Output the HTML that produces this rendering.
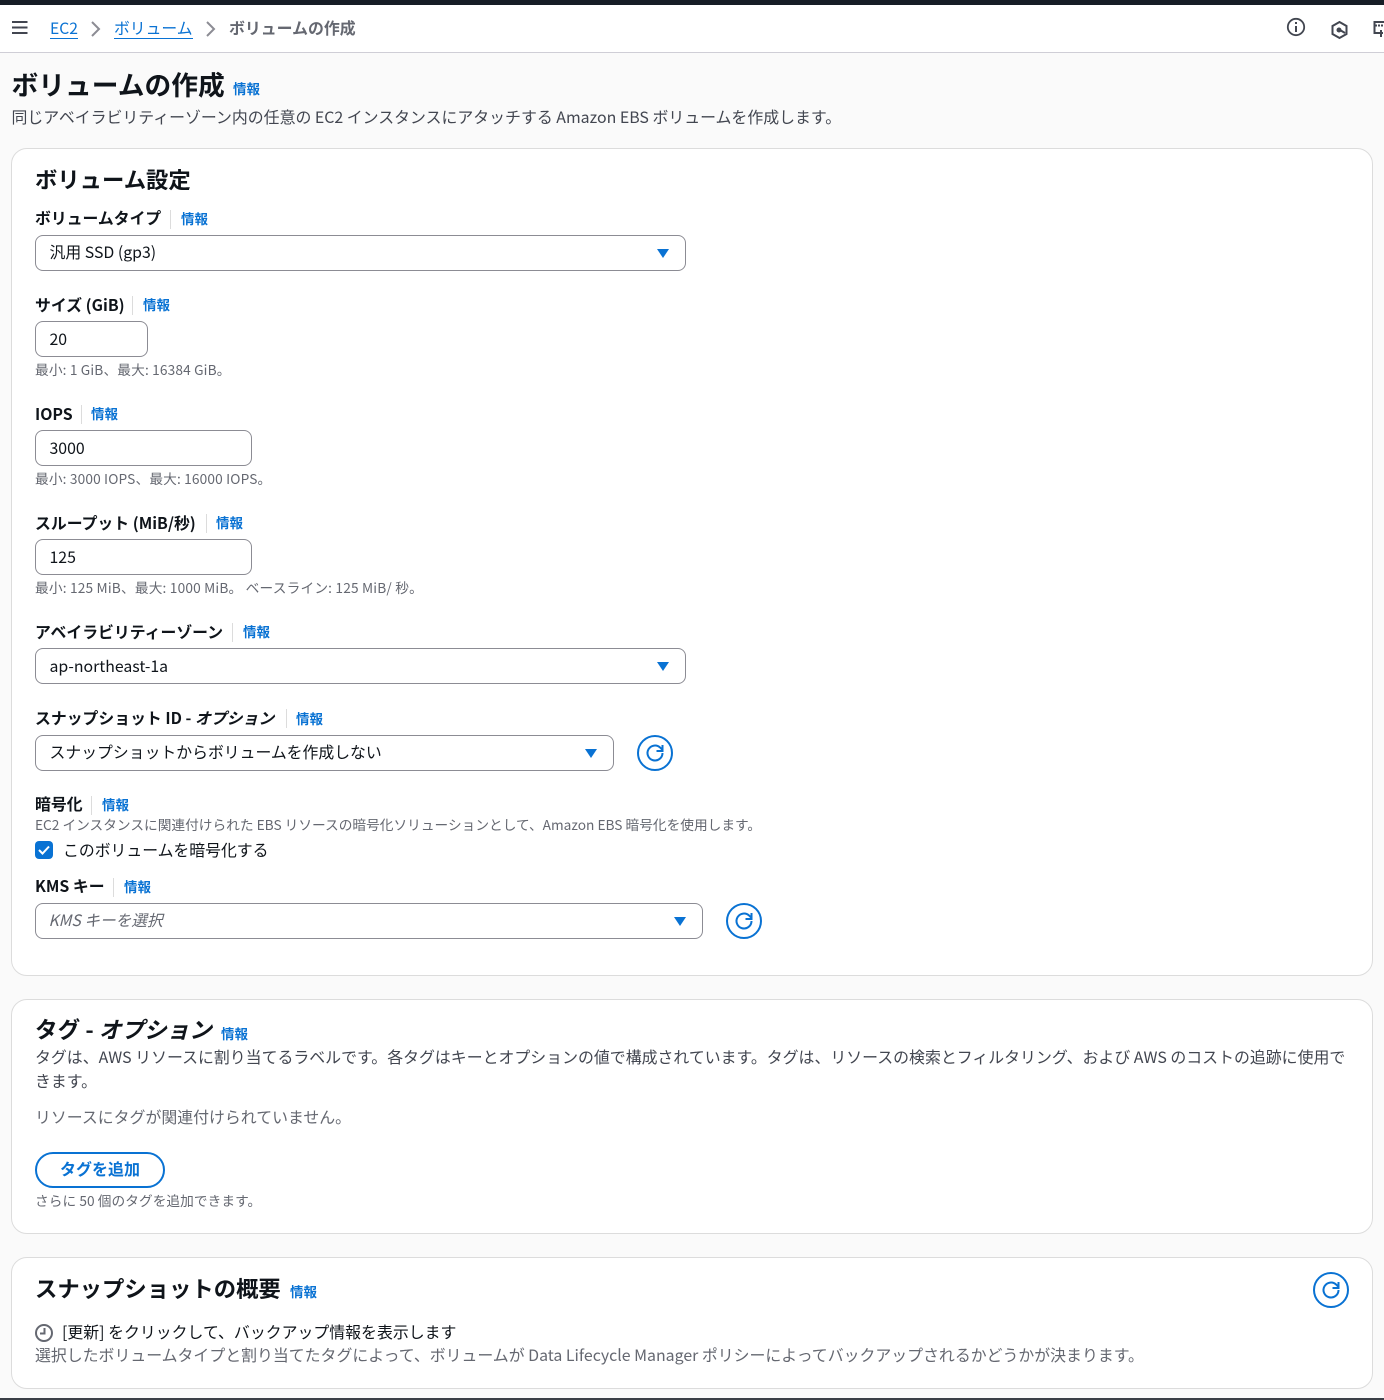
<!DOCTYPE html>
<html lang="ja"><head><meta charset="utf-8"><title>ボリュームの作成</title>
<style>
html,body{margin:0;padding:0}
body{width:1384px;height:1400px;position:relative;overflow:hidden;background:#fafafa;font-family:"Noto Sans CJK JP","Liberation Sans",sans-serif;color:#0f141a;font-size:16px}
.a,.t,.card,.in,.sel,.i,.sep{position:absolute;box-sizing:border-box}
.t{white-space:nowrap;line-height:20px}
.card{left:11px;width:1362px;background:#fff;border:1px solid #dcdcdc;border-radius:16px}
.l{font-weight:700;font-size:15.850px;color:#0f141a}
.i{white-space:nowrap;line-height:18px;font-size:13.500px;font-weight:700;color:#0972d3}
.sep{width:1px;height:19px;background:#dcdcdc}
.d{font-size:13.700px;color:#656871}
.s{letter-spacing:.15px}
.b{font-size:15.900px;color:#424650}
.in,.sel{background:#fff;border:1px solid #8c8c94;border-radius:8px;height:36px;padding:0 13.500px;line-height:33px;font-size:15.850px;color:#0f141a;white-space:nowrap}
.arr{position:absolute;top:13px;width:0;height:0;border-left:6px solid transparent;border-right:6px solid transparent;border-top:9px solid #0972d3}
.h{font-weight:700;color:#0f141a}
svg{position:absolute;display:block}
</style></head><body>
<div class="a" style="left:0;top:0;width:1384px;height:53px;background:#fff;border-bottom:1px solid #cfced6"></div>
<div class="a" style="left:0;top:0;width:1384px;height:5px;background:#161d26"></div>
<svg style="left:11px;top:20px" width="18" height="16" viewBox="0 0 18 16"><path d="M1 2h15.500M1 7.500h15.500M1 13h15.500" stroke="#424650" stroke-width="2" fill="none"/></svg>
<div class="t" style="left:50px;top:19px;color:#0972d3;border-bottom:1px solid #0972d3;height:20px;line-height:18px;font-size:15.700px">EC2</div>
<svg style="left:90px;top:21px" width="12" height="16" viewBox="0 0 12 16"><path d="M2 1l7 7-7 7" stroke="#8c8c94" stroke-width="2" fill="none"/></svg>
<div class="t" style="left:114px;top:19px;color:#0972d3;border-bottom:1px solid #0972d3;height:20px;line-height:18px;font-size:15.800px">ボリューム</div>
<svg style="left:205px;top:21px" width="12" height="16" viewBox="0 0 12 16"><path d="M2 1l7 7-7 7" stroke="#8c8c94" stroke-width="2" fill="none"/></svg>
<div class="t" style="left:229px;top:18px;color:#656871;font-weight:700;font-size:15.900px">ボリュームの作成</div>
<svg style="left:1286px;top:17px" width="20" height="20" viewBox="0 0 20 20"><circle cx="10" cy="10" r="8.200" fill="none" stroke="#424650" stroke-width="1.800"/><path d="M10 9v6" stroke="#424650" stroke-width="2"/><path d="M10 5v2" stroke="#424650" stroke-width="2"/></svg>
<svg style="left:1330px;top:20px" width="20" height="20" viewBox="0 0 20 20"><path d="M9.500 2l7 4v8l-7 4-7-4V6z" fill="none" stroke="#424650" stroke-width="2"/><circle cx="9" cy="10" r="2.500" fill="#424650"/><path d="M10 10l5 3" stroke="#424650" stroke-width="2"/></svg>
<svg style="left:1372px;top:20px" width="12" height="20" viewBox="0 0 12 20"><path d="M12 2H2.500v11H7" fill="none" stroke="#424650" stroke-width="2"/><path d="M3 5.500h9" stroke="#424650" stroke-width="2" stroke-dasharray="2 1"/><path d="M6 13h5M9 10v7" fill="none" stroke="#424650" stroke-width="2"/></svg>

<div class="t h" style="left:11.500px;top:65px;font-size:26.750px;line-height:38px">ボリュームの作成</div>
<div class="i" style="left:233px;top:79px">情報</div>
<div class="t b" style="left:11.500px;top:107px">同じアベイラビリティーゾーン内の任意の EC2 インスタンスにアタッチする Amazon EBS ボリュームを作成します。</div>

<div class="card" style="top:148px;height:828px"></div>
<div class="t h" style="left:35px;top:163px;font-size:22.350px;line-height:32px">ボリューム設定</div>

<div class="t l" style="left:35px;top:208px">ボリュームタイプ</div><div class="sep" style="left:170px;top:210px"></div><div class="i" style="left:181px;top:209px">情報</div>
<div class="sel" style="left:35px;top:235px;width:651px;line-height:32px">汎用 SSD (gp3)<span class="arr" style="left:621px"></span></div>

<div class="t l" style="left:35px;top:295px">サイズ (GiB)</div><div class="sep" style="left:132px;top:296px"></div><div class="i" style="left:143px;top:295px">情報</div>
<div class="in" style="left:35px;top:321px;width:113px">20</div>
<div class="t d s" style="left:35px;top:359px">最小: 1 GiB、最大: 16384 GiB。</div>

<div class="t l" style="left:35px;top:404px">IOPS</div><div class="sep" style="left:81px;top:405px"></div><div class="i" style="left:91px;top:404px">情報</div>
<div class="in" style="left:35px;top:430px;width:217px">3000</div>
<div class="t d s" style="left:35px;top:468px">最小: 3000 IOPS、最大: 16000 IOPS。</div>

<div class="t l" style="left:35px;top:513px">スループット (MiB/秒)</div><div class="sep" style="left:206px;top:514px"></div><div class="i" style="left:216px;top:513px">情報</div>
<div class="in" style="left:35px;top:539px;width:217px">125</div>
<div class="t d" style="left:35px;top:577px;letter-spacing:.18px">最小: 125 MiB、最大: 1000 MiB。 ベースライン: 125 MiB/ 秒。</div>

<div class="t l" style="left:35px;top:622px">アベイラビリティーゾーン</div><div class="sep" style="left:232px;top:623px"></div><div class="i" style="left:243px;top:622px">情報</div>
<div class="sel" style="left:35px;top:648px;width:651px">ap-northeast-1a<span class="arr" style="left:621px"></span></div>

<div class="t l" style="left:35px;top:708px">スナップショット ID - <i>オプション</i></div><div class="sep" style="left:286px;top:709px"></div><div class="i" style="left:296px;top:709px">情報</div>
<div class="sel" style="left:35px;top:735px;width:579px;line-height:32px">スナップショットからボリュームを作成しない<span class="arr" style="left:549px"></span></div>
<svg style="left:635.500px;top:734px" width="38" height="38" viewBox="0 0 38 38"><circle cx="19" cy="19" r="17" fill="none" stroke="#0972d3" stroke-width="2"/><path d="M26.500 19a7.500 7.500 0 1 1-2.200-5.300l2 2" fill="none" stroke="#0972d3" stroke-width="2"/><path d="M26.500 11v6h-6" fill="none" stroke="#0972d3" stroke-width="2"/></svg>

<div class="t l" style="left:35px;top:794px">暗号化</div><div class="sep" style="left:91px;top:796px"></div><div class="i" style="left:102px;top:795px">情報</div>
<div class="t d" style="left:35px;top:814px">EC2 インスタンスに関連付けられた EBS リソースの暗号化ソリューションとして、Amazon EBS 暗号化を使用します。</div>
<div class="a" style="left:35px;top:841px;width:18px;height:18px;background:#0972d3;border-radius:4px"></div>
<svg style="left:35px;top:841px" width="18" height="18" viewBox="0 0 18 18"><path d="M4 9l3.500 3.500L14 5.500" fill="none" stroke="#fff" stroke-width="2"/></svg>
<div class="t" style="left:63px;top:840px;color:#0f141a;font-size:15.850px">このボリュームを暗号化する</div>

<div class="t l" style="left:35px;top:876px">KMS キー</div><div class="sep" style="left:113px;top:878px"></div><div class="i" style="left:124px;top:877px">情報</div>
<div class="sel" style="left:35px;top:903px;width:668px;color:#656871;font-style:italic;font-size:15.700px;text-indent:-1px;line-height:32px">KMS キーを選択<span class="arr" style="left:638px"></span></div>
<svg style="left:725px;top:902px" width="38" height="38" viewBox="0 0 38 38"><circle cx="19" cy="19" r="17" fill="none" stroke="#0972d3" stroke-width="2"/><path d="M26.500 19a7.500 7.500 0 1 1-2.200-5.300l2 2" fill="none" stroke="#0972d3" stroke-width="2"/><path d="M26.500 11v6h-6" fill="none" stroke="#0972d3" stroke-width="2"/></svg>

<div class="card" style="top:999px;height:235px"></div>
<div class="t h" style="left:35px;top:1013px;font-size:22.600px;line-height:32px">タグ - <i>オプション</i></div>
<div class="i" style="left:221px;top:1024px">情報</div>
<div class="t b" style="left:35px;top:1047px;letter-spacing:.01px">タグは、AWS リソースに割り当てるラベルです。各タグはキーとオプションの値で構成されています。タグは、リソースの検索とフィルタリング、および AWS のコストの追跡に使用で</div>
<div class="t b" style="left:35px;top:1071px">きます。</div>
<div class="t" style="left:35px;top:1107px;font-size:15.900px;color:#656871">リソースにタグが関連付けられていません。</div>
<div class="a" style="left:35px;top:1152px;width:130px;height:36px;border:2px solid #0972d3;border-radius:20px;background:#fff;color:#0972d3;font-weight:700;text-align:center;line-height:29px;font-size:16px">タグを追加</div>
<div class="t d" style="left:35px;top:1190px;letter-spacing:.05px">さらに 50 個のタグを追加できます。</div>

<div class="card" style="top:1257px;height:132px"></div>
<div class="t h" style="left:35px;top:1272px;font-size:22.350px;line-height:32px">スナップショットの概要</div>
<div class="i" style="left:290px;top:1282px">情報</div>
<svg style="left:1312px;top:1271px" width="38" height="38" viewBox="0 0 38 38"><circle cx="19" cy="19" r="17" fill="none" stroke="#0972d3" stroke-width="2"/><path d="M26.500 19a7.500 7.500 0 1 1-2.200-5.300l2 2" fill="none" stroke="#0972d3" stroke-width="2"/><path d="M26.500 11v6h-6" fill="none" stroke="#0972d3" stroke-width="2"/></svg>
<svg style="left:34px;top:1323px" width="20" height="20" viewBox="0 0 20 20"><circle cx="10" cy="10" r="8" fill="none" stroke="#656871" stroke-width="2"/><path d="M10.500 5v5.500H6" fill="none" stroke="#656871" stroke-width="2"/></svg>
<div class="t" style="left:62px;top:1322px;color:#0f141a;font-size:15.900px">[更新] をクリックして、バックアップ情報を表示します</div>
<div class="t b" style="left:35px;top:1345px;color:#656871">選択したボリュームタイプと割り当てたタグによって、ボリュームが Data Lifecycle Manager ポリシーによってバックアップされるかどうかが決まります。</div>
<div class="a" style="left:0;top:1398px;width:1384px;height:2px;background:#3a3f47"></div>
</body></html>
